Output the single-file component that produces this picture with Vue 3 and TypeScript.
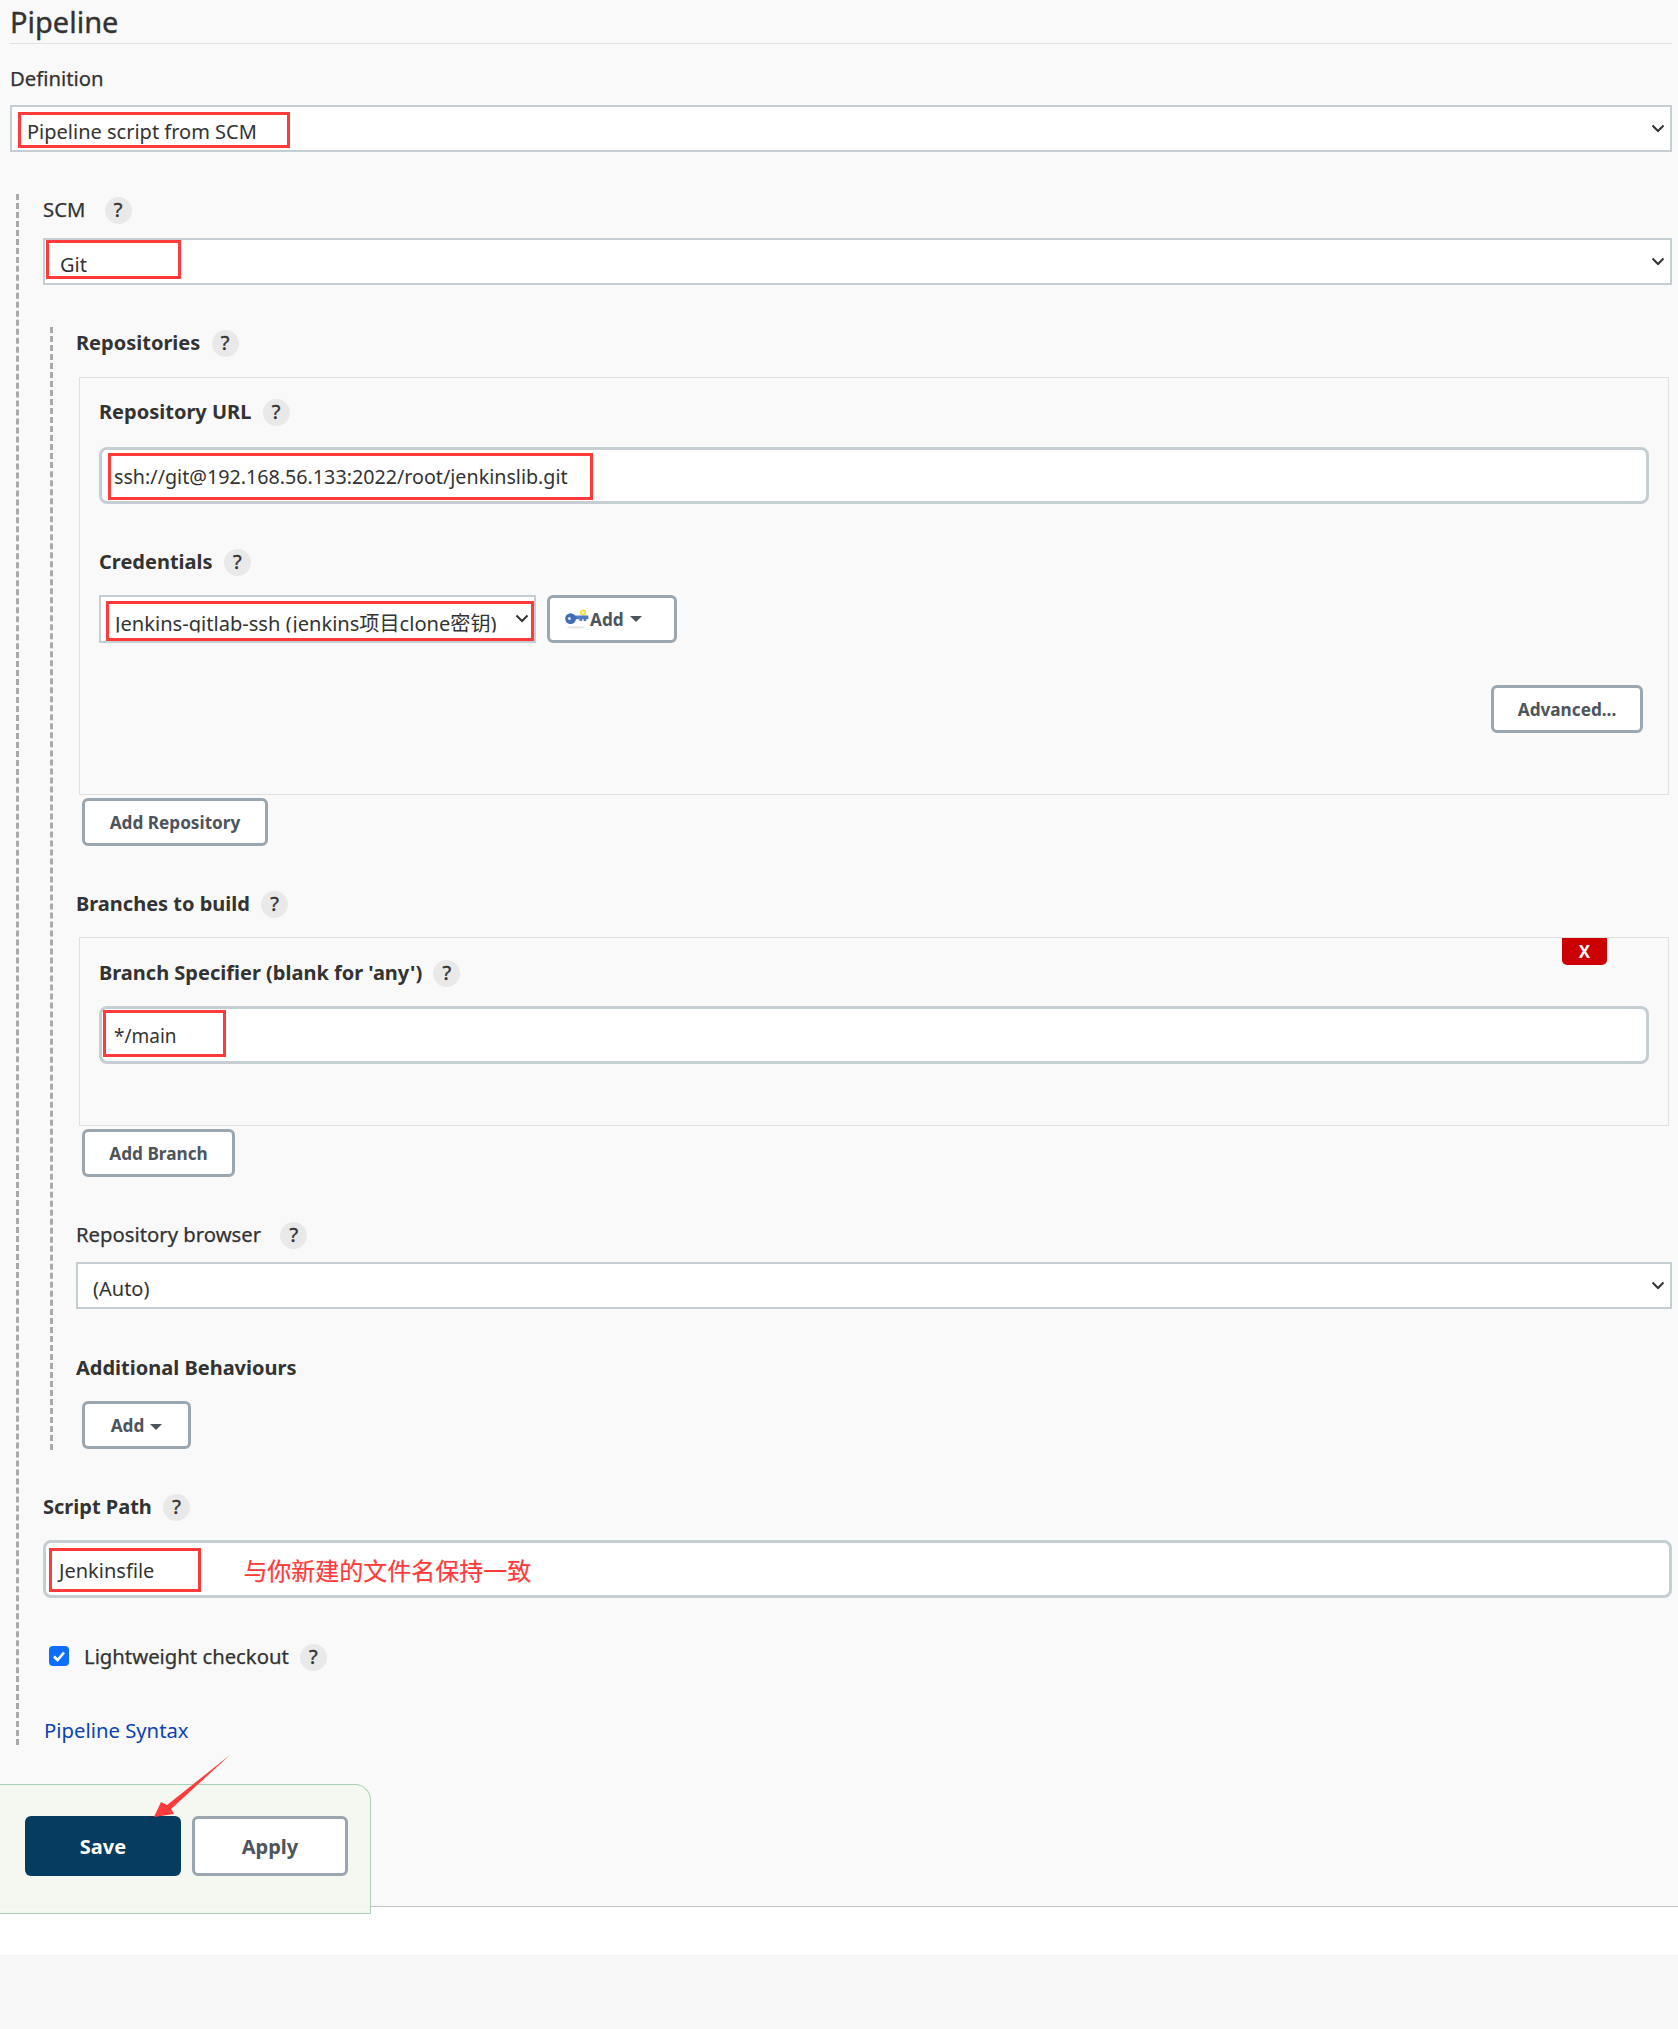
<script setup lang="ts">
const annotation = '与你新建的文件名保持一致'
</script>

<template>
  <div class="page">
    <main class="main">
      <h2 class="title">Pipeline</h2>

      <div class="label plain def-label">Definition</div>
      <div class="select def-select">
        <span class="select-text">Pipeline script from SCM</span>
        <svg class="chevron" viewBox="0 0 14 9"><path d="M1.5 1.5 7 7l5.5-5.5" /></svg>
        <i class="mark mark-def"></i>
      </div>

      <div class="scm">
        <div class="label plain">SCM <span class="help wide">?</span></div>
        <div class="select scm-select">
          <span class="select-text">Git</span>
          <svg class="chevron" viewBox="0 0 14 9"><path d="M1.5 1.5 7 7l5.5-5.5" /></svg>
          <i class="mark mark-git"></i>
        </div>

        <div class="git">
          <div class="label strong">Repositories <span class="help">?</span></div>

          <div class="box repo-box">
            <div class="label strong">Repository URL <span class="help">?</span></div>
            <div class="input url-input">
              <span class="url-text">ssh://git@192.168.56.133:2022/root/jenkinslib.git</span>
              <i class="mark mark-url"></i>
            </div>

            <div class="label strong cred-label">Credentials <span class="help">?</span></div>
            <div class="cred-row">
              <div class="select cred-select">
                <span class="select-text cred-text">Jenkins-gitlab-ssh (jenkins项目clone密钥)</span>
                <svg class="chevron" viewBox="0 0 14 9"><path d="M1.5 1.5 7 7l5.5-5.5" /></svg>
                <i class="mark mark-cred"></i>
              </div>
              <button class="btn key-add">
                <svg class="key" viewBox="0 0 24 20">
                  <ellipse cx="11" cy="18.4" rx="9" ry="1.1" fill="#e4e4e4" />
                  <circle cx="18" cy="3.6" r="2.4" fill="#fdf6a8" stroke="#efdc34" stroke-width="1.4" />
                  <rect x="6" y="6.6" width="17.5" height="3.6" rx="1.2" fill="#4f7cc0" />
                  <rect x="14.5" y="9.5" width="2.6" height="2.6" fill="#4f7cc0" />
                  <rect x="18.6" y="9.5" width="2.6" height="2.6" fill="#4f7cc0" />
                  <circle cx="5.6" cy="9.6" r="5.4" fill="#3f6db5" />
                  <circle cx="4.4" cy="9.6" r="1.5" fill="#dce7f7" />
                </svg>
                <span>Add</span><span class="caret"></span>
              </button>
            </div>
            <div class="adv-row"><button class="btn adv">Advanced...</button></div>
          </div>
          <button class="btn add-repo">Add Repository</button>

          <div class="label strong branches-label">Branches to build <span class="help">?</span></div>
          <div class="box branch-box">
            <button class="remove">X</button>
            <div class="label strong">Branch Specifier (blank for 'any') <span class="help">?</span></div>
            <div class="input branch-input">
              <span class="branch-text">*/main</span>
              <i class="mark mark-branch"></i>
            </div>
          </div>
          <button class="btn add-branch">Add Branch</button>

          <div class="label plain browser-label">Repository browser <span class="help wide">?</span></div>
          <div class="select browser-select">
            <span class="select-text">(Auto)</span>
            <svg class="chevron" viewBox="0 0 14 9"><path d="M1.5 1.5 7 7l5.5-5.5" /></svg>
          </div>

          <div class="label strong behaviours-label">Additional Behaviours</div>
          <button class="btn add-behaviour"><span>Add</span><span class="caret"></span></button>
        </div>

        <div class="label strong script-label">Script Path <span class="help">?</span></div>
        <div class="input script-input">
          <span>Jenkinsfile</span>
          <span class="note">{{ annotation }}</span>
          <i class="mark mark-script"></i>
        </div>

        <label class="label plain check-row">
          <span class="checkbox">
            <svg viewBox="0 0 20 20"><path d="M5 10.5 8.6 14 15 6.5" /></svg>
          </span>
          <span>Lightweight checkout</span><span class="help check-help">?</span>
        </label>

        <a class="link">Pipeline Syntax</a>
      </div>

      <div class="actions">
        <button class="action save">Save</button>
        <button class="action apply">Apply</button>
      </div>
    </main>
    <div class="white-strip"></div>
    <div class="rest"></div>

    <svg class="arrow" viewBox="0 0 90 74" width="90" height="74">
      <path d="M80 2 21 56 24 61 4 64 11 49 17 52Z" fill="#ff3b3b" />
    </svg>
  </div>
</template>

<style>
html, body { margin: 0; padding: 0; }
</style>

<style scoped>
.page {
  position: relative;
  width: 1678px;
  height: 2029px;
  display: flex;
  flex-direction: column;
  background: #f8f8f8;
  font-family: "Noto Sans", "Noto Sans CJK SC", sans-serif;
  font-size: 20px;
  color: #333;
  overflow: hidden;
}
.main {
  position: relative;
  height: 1906px;
  box-sizing: border-box;
  padding: 0 6px 0 10px;
  background: #f9f9f9;
}
.title {
  margin: 0;
  height: 43px;
  line-height: 43px;
  font-size: 29px;
  font-weight: 400;
  border-bottom: 1px solid #e2e2e2;
  color: #333;
  -webkit-text-stroke: 0.35px #333;
}
.label {
  display: flex;
  align-items: center;
  height: 24px;
  line-height: 24px;
  white-space: pre;
}
.plain {
  box-sizing: border-box;
  padding-bottom: 2px;
  font-size: 20.3px;
  -webkit-text-stroke: 0.25px #333;
}
.plain .help { margin-bottom: -2px; }
.strong { font-weight: 700; }
.help {
  width: 27px;
  height: 27px;
  margin-left: 6px;
  border-radius: 50%;
  background: #e9e9e9;
  display: inline-flex;
  align-items: center;
  justify-content: center;
  font-size: 20px;
  font-weight: 400;
  -webkit-text-stroke: 0.4px #333;
  flex: none;
}
.help.wide { margin-left: 14px; }
.check-help { margin-left: 11px; }
.def-label { margin-top: 23px; }

.select {
  position: relative;
  box-sizing: border-box;
  height: 47px;
  background: #fff;
  border: 2px solid #c5ced3;
  display: flex;
  align-items: center;
}
.select-text { position: relative; top: 3px; white-space: pre; }
.chevron {
  position: absolute;
  right: 5px;
  top: 17px;
  width: 14px;
  height: 9px;
  fill: none;
  stroke: #333;
  stroke-width: 2;
}
.mark {
  position: absolute;
  border: 3px solid #ff3b3b;
  box-sizing: border-box;
  pointer-events: none;
}
.def-select { margin-top: 14px; padding-left: 15px; }
.mark-def { left: 6px; top: 5px; width: 272px; height: 36px; }

.scm {
  margin: 42px 0 0 6px;
  border-left: 3px dashed #aaa;
  padding: 4px 0 3px 24px;
}
.scm-select { margin-top: 16px; padding-left: 15px; }
.mark-git { left: 1px; top: 0; width: 135px; height: 39px; }

.git {
  margin: 42px 0 0 7px;
  border-left: 3px dashed #aaa;
  padding: 4px 0 1px 23px;
}
.box {
  position: relative;
  box-sizing: border-box;
  margin: 22px 3px 0 3px;
  border: 1px solid #e0e0e0;
  padding: 22px 19px 61px;
}
.input {
  position: relative;
  box-sizing: border-box;
  height: 57px;
  background: #fff;
  border: 3px solid #c5ced3;
  border-radius: 8px;
  display: flex;
  align-items: center;
  padding: 2px 0 0 11px;
  white-space: pre;
}
.url-input { margin-top: 23px; padding-left: 12px; }
.url-text { font-size: 19.7px; }
.mark-url { left: 6px; top: 3px; width: 485px; height: 47px; }
.cred-label { margin-top: 46px; }
.cred-row {
  display: flex;
  gap: 11px;
  margin-top: 21px;
}
.cred-select {
  width: 437px;
  height: 48px;
  padding-left: 14px;
}
.cred-text {
  font-size: 20.1px;
  clip-path: inset(0 0 4px 0);
}
.cred-select .chevron { right: 5px; top: 17px; }
.mark-cred { left: 5px; top: 4px; width: 428px; height: 40px; }

.btn {
  box-sizing: border-box;
  height: 48px;
  background: #fff;
  border: 3px solid #9aa7b0;
  border-radius: 6px;
  color: #4d545d;
  font-family: inherit;
  font-size: 17.2px;
  font-weight: 700;
  display: block;
  padding: 0;
  white-space: pre;
}
.key-add {
  width: 130px;
  display: flex;
  align-items: center;
  justify-content: flex-start;
  padding-left: 15px;
}
.key { width: 24px; height: 20px; margin-right: 1px; flex: none; }
.caret {
  display: inline-block;
  vertical-align: middle;
  width: 0;
  height: 0;
  margin-left: 6px;
  border-left: 6px solid transparent;
  border-right: 6px solid transparent;
  border-top: 6px solid #4d545d;
}
.adv-row {
  display: flex;
  justify-content: flex-end;
  margin-top: 42px;
  padding-right: 6px;
}
.adv { width: 152px; }
.add-repo { width: 186px; margin: 3px 0 0 6px; }
.branches-label { margin-top: 46px; }
.branch-box { margin-top: 21px; padding-top: 23px; }
.remove {
  position: absolute;
  top: 0;
  right: 61px;
  width: 45px;
  height: 27px;
  padding: 0;
  border: 0;
  border-radius: 0 0 5px 5px;
  background: #c00;
  color: #f5f5f5;
  font-family: inherit;
  font-size: 17px;
  font-weight: 700;
}
.branch-input { margin-top: 21px; height: 58px; padding-left: 12px; }
.branch-text { font-size: 19px; }
.mark-branch { left: 1px; top: 1px; width: 123px; height: 47px; }
.add-branch { width: 153px; margin: 3px 0 0 6px; }
.browser-label { margin-top: 46px; }
.browser-select { margin-top: 15px; padding-left: 15px; }
.behaviours-label { margin-top: 47px; }
.add-behaviour {
  width: 109px;
  margin: 21px 0 0 6px;
}
.script-label { margin-top: 45px; }
.script-input { margin-top: 21px; height: 58px; padding-left: 13px; }
.script-input .note { position: relative; top: -1px; }
.note {
  margin-left: 89px;
  color: #ff3b3b;
  font-size: 24px;
  -webkit-text-stroke: 0.2px #ff3b3b;
}
.mark-script { left: 3px; top: 5px; width: 152px; height: 44px; }
.check-row { margin-top: 47px; padding-left: 6px; }
.checkbox {
  box-sizing: border-box;
  width: 20px;
  height: 20px;
  margin-right: 15px;
  border-radius: 4px;
  background: #0d6efd;
  flex: none;
}
.checkbox svg {
  display: block;
  width: 20px;
  height: 20px;
  fill: none;
  stroke: #fff;
  stroke-width: 2.6;
}
.link {
  display: block;
  height: 24px;
  line-height: 24px;
  margin: 49px 0 0 1px;
  color: #0b43b4;
  font-size: 20.3px;
}
.actions {
  position: absolute;
  left: 0;
  bottom: -8px;
  box-sizing: border-box;
  width: 371px;
  height: 130px;
  padding: 31px 0 0 25px;
  display: flex;
  gap: 11px;
  background: rgba(244, 248, 240, 0.93);
  border: 1px solid #a9d1b5;
  border-left: 0;
  border-top-right-radius: 16px;
}
.action {
  box-sizing: border-box;
  width: 156px;
  height: 60px;
  border-radius: 6px;
  font-family: inherit;
  font-size: 20px;
  font-weight: 700;
  padding: 0;
}
.save {
  background: #063c60;
  border: 0;
  color: #fff;
}
.apply {
  background: #fff;
  border: 3px solid #9aa7b0;
  color: #4d545d;
}
.white-strip {
  height: 50px;
  box-sizing: border-box;
  background: #fff;
  border-top: 1px solid #c0c8cc;
  border-bottom: 1px solid #f2f2f2;
}
.rest { flex: 1; }
.arrow {
  position: absolute;
  left: 150px;
  top: 1753px;
}
</style>
